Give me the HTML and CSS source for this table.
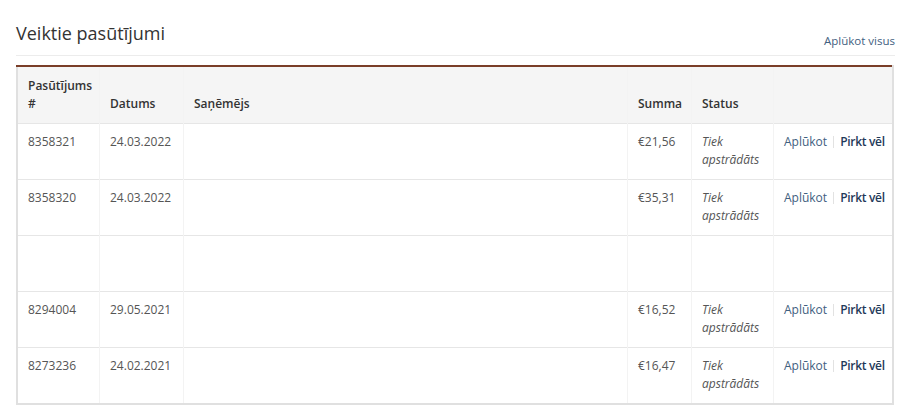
FILE: index.html
```html
<!DOCTYPE html>
<html lang="lv">
<head>
<meta charset="utf-8">
<title>Veiktie pasūtījumi</title>
<link rel="stylesheet" href="styles.css">
</head>
<body>
<div class="page">
  <div class="head">
    <h2 class="title">Veiktie pasūtījumi</h2>
    <a class="all" href="#">Aplūkot visus</a>
  </div>
  <table class="orders">
    <thead>
      <tr>
        <th class="c-id">Pasūtījums #</th>
        <th class="c-date">Datums</th>
        <th class="c-to">Saņēmējs</th>
        <th class="c-sum">Summa</th>
        <th class="c-st">Status</th>
        <th class="c-act"></th>
      </tr>
    </thead>
    <tbody>
      <tr>
        <td>8358321</td><td>24.03.2022</td><td></td><td>€21,56</td>
        <td class="st">Tiek apstrādāts</td>
        <td class="act"><a href="#" class="view">Aplūkot</a><span class="sep"></span><a href="#" class="buy">Pirkt vēl</a></td>
      </tr>
      <tr>
        <td>8358320</td><td>24.03.2022</td><td></td><td>€35,31</td>
        <td class="st">Tiek apstrādāts</td>
        <td class="act"><a href="#" class="view">Aplūkot</a><span class="sep"></span><a href="#" class="buy">Pirkt vēl</a></td>
      </tr>
      <tr class="empty">
        <td></td><td></td><td></td><td></td><td></td><td></td>
      </tr>
      <tr>
        <td>8294004</td><td>29.05.2021</td><td></td><td>€16,52</td>
        <td class="st">Tiek apstrādāts</td>
        <td class="act"><a href="#" class="view">Aplūkot</a><span class="sep"></span><a href="#" class="buy">Pirkt vēl</a></td>
      </tr>
      <tr>
        <td>8273236</td><td>24.02.2021</td><td></td><td>€16,47</td>
        <td class="st">Tiek apstrādāts</td>
        <td class="act"><a href="#" class="view">Aplūkot</a><span class="sep"></span><a href="#" class="buy">Pirkt vēl</a></td>
      </tr>
    </tbody>
  </table>
</div>
</body>
</html>
```
FILE: styles.css
```css
html, body {
  margin: 0;
  padding: 0;
  background: #fff;
}
body {
  font-family: "Open Sans", "Noto Sans", "DejaVu Sans", sans-serif;
  color: #444;
  font-size: 12px;
}
.page {
  padding: 19px 5px 0 16px;
}
.head {
  display: flex;
  justify-content: space-between;
  align-items: flex-end;
  border-bottom: 1px solid #ececec;
  padding-bottom: 8px;
  margin-bottom: 9px;
}
.title {
  margin: 0;
  font-size: 18px;
  font-weight: 400;
  color: #333;
  line-height: 28px;
}
.all {
  color: #3f6080;
  text-decoration: none;
  font-size: 11.5px;
  line-height: 16px;
  margin-bottom: -2px;
}
.orders {
  width: 878px;
  border-collapse: collapse;
  border-top: 2px solid #7a3e28;
  border-left: 2px solid #e0e0e0;
  border-right: 2px solid #e0e0e0;
  border-bottom: 2px solid #e0e0e0;
  table-layout: fixed;
}
.orders th, .orders td {
  text-align: left;
  vertical-align: top;
  padding: 9px 10px 10px;
  line-height: 18px;
  border-left: 1px solid #f3f3f3;
}
.orders th:first-child, .orders td:first-child {
  border-left: none;
}
.orders thead th {
  background: #f5f5f5;
  vertical-align: bottom;
  font-weight: 600;
  color: #333;
  padding: 10px 10px 10px;
}
.orders tbody tr {
  border-top: 1px solid #e6e6e6;
}
.orders tbody td {
  color: #555;
}
.c-id { width: 61px; }
.c-date { width: 63px; }
.c-sum { width: 43px; }
.c-st { width: 61px; }
.c-act { width: 98px; }
.st {
  font-style: italic;
  color: #666;
}
.empty td {
  height: 36px;
}
.orders td.act {
  white-space: nowrap;
  padding-right: 4px;
}
.act a {
  text-decoration: none;
}
.view {
  color: #3f6080;
}
.buy {
  color: #1f3a5a;
  font-weight: 600;
  letter-spacing: -0.3px;
}
.sep {
  display: inline-block;
  width: 1px;
  height: 12px;
  background: #e2e2e2;
  margin: 0 6px;
  vertical-align: -2px;
}
```
